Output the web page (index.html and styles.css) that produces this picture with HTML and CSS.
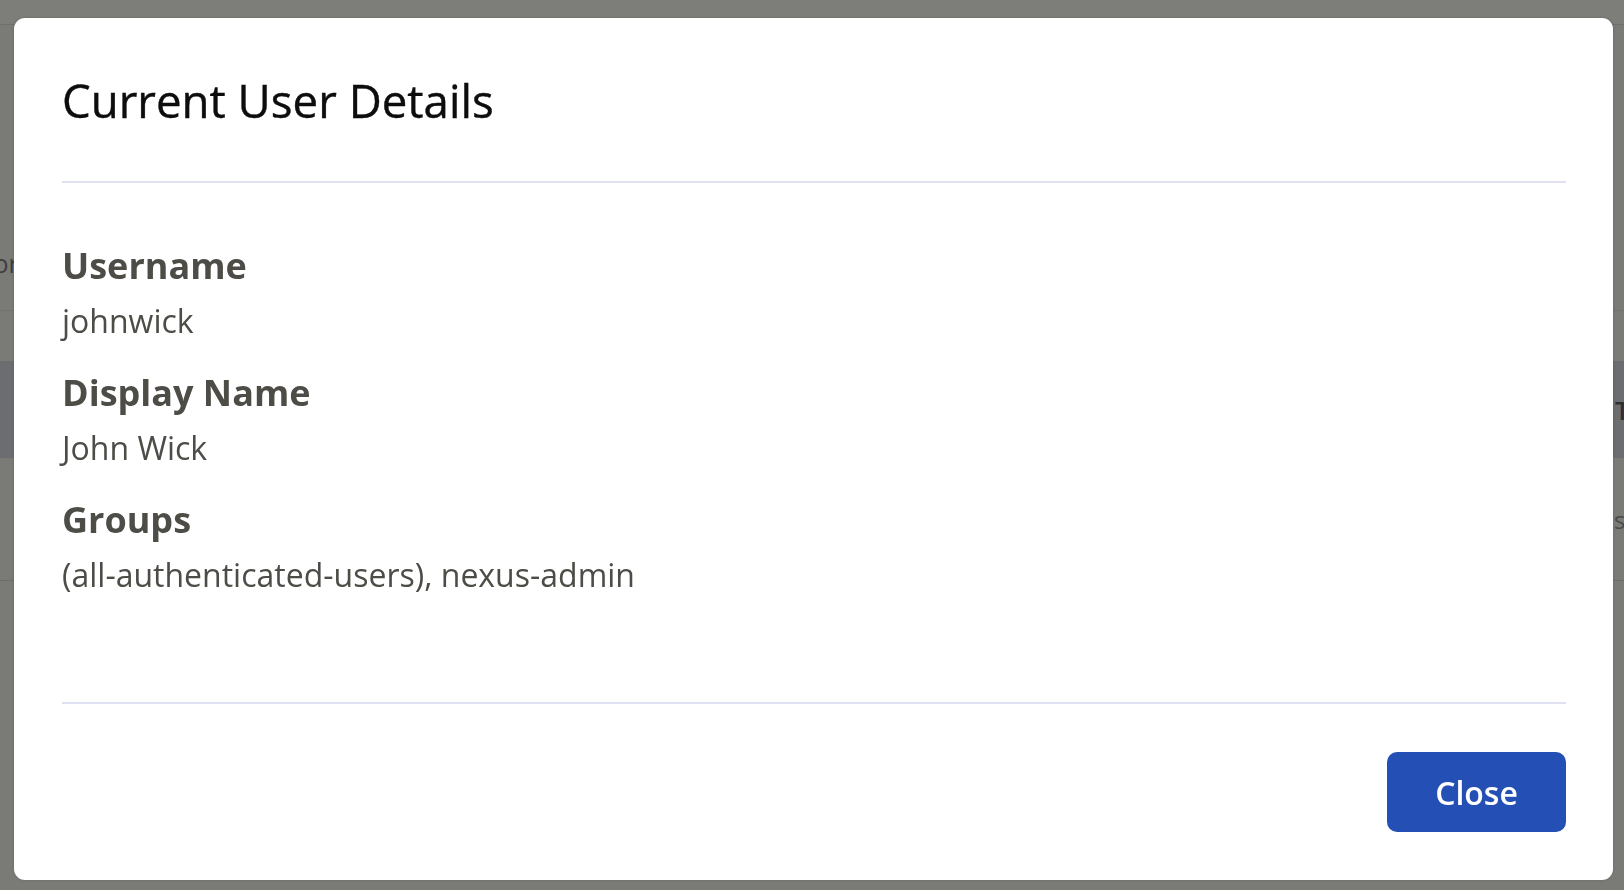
FILE: index.html
```html
<!DOCTYPE html>
<html lang="en">
<head>
<meta charset="utf-8">
<title>Current User Details</title>
<link rel="stylesheet" href="styles.css">
</head>
<body>
<div class="page">
  <div class="topbar"></div>
  <div class="content">
    <div class="desc-row"><span class="desc-text">Vendor</span></div>
    <div class="table">
      <div class="thead"><span class="th-cell">Type</span></div>
      <div class="trow"><span class="td-cell">s</span></div>
    </div>
  </div>
</div>
<div class="backdrop">
  <div class="modal" role="dialog" aria-labelledby="dlg-title">
    <div class="modal-header">
      <h2 class="modal-title" id="dlg-title">Current User Details</h2>
    </div>
    <div class="modal-body">
      <div class="field">
        <div class="field-label">Username</div>
        <div class="field-value">johnwick</div>
      </div>
      <div class="field">
        <div class="field-label">Display Name</div>
        <div class="field-value">John Wick</div>
      </div>
      <div class="field">
        <div class="field-label">Groups</div>
        <div class="field-value">(all-authenticated-users), nexus-admin</div>
      </div>
    </div>
    <div class="modal-footer">
      <button class="btn-primary" type="button">Close</button>
    </div>
  </div>
</div>
</body>
</html>
```

FILE: styles.css
```css
* { box-sizing: border-box; }

html, body {
  margin: 0;
  padding: 0;
  width: 1624px;
  height: 890px;
  overflow: hidden;
  font-family: "Open Sans", "Liberation Sans", sans-serif;
  background: #7a7a77;
}

/* dimmed page behind the dialog */
.page {
  width: 1624px;
  height: 890px;
  display: flex;
  flex-direction: column;
}

.topbar {
  height: 25px;
  background: #7d7d79;
  border-bottom: 1px solid #6f6f6d;
  flex: none;
}

.content {
  flex: 1;
  background: #7a7a77;
  display: flex;
  flex-direction: column;
}

.desc-row {
  height: 286px;
  border-bottom: 1px solid #727270;
  padding-top: 221px;
  overflow: hidden;
}

.desc-text {
  display: block;
  margin-left: -66px;
  font-size: 25px;
  line-height: 34px;
  color: #3f3f3d;
}

.table {
  margin-top: 50px;
}

.thead {
  height: 97px;
  background: #6c6d71;
  display: flex;
  align-items: center;
  justify-content: flex-end;
  overflow: hidden;
}

.th-cell {
  font-size: 26px;
  font-weight: 600;
  color: #2f2f2f;
  margin-right: -40px;
  width: 49px;
}

.trow {
  height: 123px;
  border-bottom: 1px solid #6e6e6c;
  display: flex;
  align-items: center;
  justify-content: flex-end;
  overflow: hidden;
}

.td-cell {
  font-size: 24px;
  color: #4a4a48;
  width: 10px;
}

/* dialog overlay */
.backdrop {
  position: fixed;
  inset: 0;
  display: flex;
  padding: 18px 11px 10px 14px;
}

.modal {
  flex: 1;
  background: #ffffff;
  border-radius: 11px;
  padding: 0 47px 0 48px;
  display: flex;
  flex-direction: column;
  box-shadow: 0 0 3px rgba(0, 0, 0, 0.15);
}

.modal-header {
  padding: 52px 0 51px;
  border-bottom: 2px solid #dfe0f1;
}

.modal-title {
  margin: 0;
  font-size: 45.6px;
  line-height: 60px;
  font-weight: 400;
  color: #0d0d0d;
  -webkit-text-stroke: 0.4px #0d0d0d;
}

.modal-body {
  flex: 1;
  padding-top: 59px;
  display: flex;
  flex-direction: column;
  gap: 26px;
}

.field {
  display: flex;
  flex-direction: column;
  gap: 9px;
}

.field-label {
  font-size: 36px;
  line-height: 48px;
  font-weight: 700;
  color: #4d4c46;
}

.field-value {
  font-size: 32px;
  line-height: 44px;
  font-weight: 400;
  color: #4d4c46;
}

.modal-footer {
  border-top: 2px solid #dfe0f1;
  padding: 48px 0;
  display: flex;
  justify-content: flex-end;
}

.btn-primary {
  width: 179px;
  height: 80px;
  border: none;
  border-radius: 10px;
  background: #244fb4;
  color: #ffffff;
  font-family: "Open Sans", "Liberation Sans", sans-serif;
  font-size: 32px;
  font-weight: 600;
  padding: 0;
  cursor: pointer;
}
```
